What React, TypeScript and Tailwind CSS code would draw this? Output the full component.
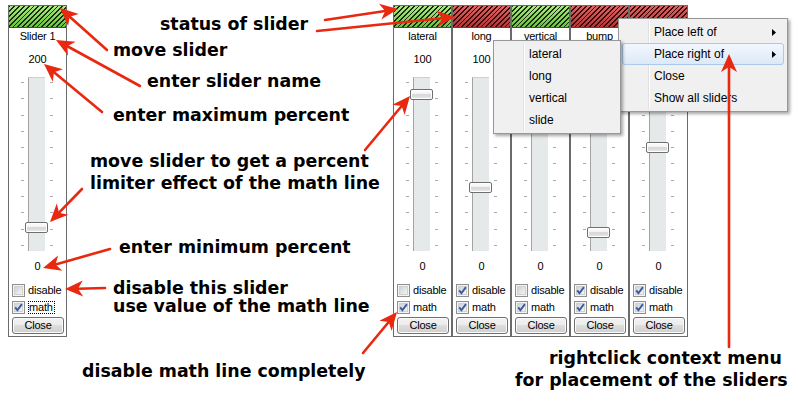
import React from 'react';

type Slider = {
  name: string;
  max: string;
  ok: boolean;
  thumb: string;
  disable: boolean;
  math: boolean;
  focus?: boolean;
};

const GREEN =
  '[background-image:repeating-linear-gradient(135deg,#1c2a12_0px,#1c2a12_1.3px,transparent_1.3px,transparent_3.4px),linear-gradient(#abeb80,#67c23b)]';
const RED =
  '[background-image:repeating-linear-gradient(135deg,#3b0c0c_0px,#3b0c0c_1.3px,transparent_1.3px,transparent_3.4px),linear-gradient(#de6565,#b43434)]';

const first: Slider = {
  name: 'Slider 1',
  max: '200',
  ok: true,
  thumb: 'top-[144.5px]',
  disable: false,
  math: true,
  focus: true,
};

const group: Slider[] = [
  { name: 'lateral', max: '100', ok: true, thumb: 'top-[11.5px]', disable: false, math: true },
  { name: 'long', max: '100', ok: false, thumb: 'top-[104.5px]', disable: true, math: true },
  { name: 'vertical', max: '100', ok: true, thumb: 'top-[25px]', disable: false, math: true },
  { name: 'bump', max: '100', ok: false, thumb: 'top-[149.5px]', disable: true, math: true },
  { name: 'slide', max: '100', ok: false, thumb: 'top-[64.5px]', disable: true, math: true },
];

const notes = [
  { text: 'status of slider', pos: 'left-[160px] top-[16px]' },
  { text: 'move slider', pos: 'left-[113px] top-[42px]' },
  { text: 'enter slider name', pos: 'left-[147px] top-[73px]' },
  { text: 'enter maximum percent', pos: 'left-[113px] top-[107px]' },
  { text: 'move slider to get a percent', pos: 'left-[90px] top-[153px]' },
  { text: 'limiter effect of the math line', pos: 'left-[90px] top-[175px]' },
  { text: 'enter minimum percent', pos: 'left-[119px] top-[239px]' },
  { text: 'disable this slider', pos: 'left-[113px] top-[280px]' },
  { text: 'use value of the math line', pos: 'left-[113px] top-[298px]' },
  { text: 'disable math line completely', pos: 'left-[82px] top-[363px]' },
  { text: 'rightclick context menu', pos: 'left-[549px] top-[350px]' },
  { text: 'for placement of the sliders', pos: 'left-[515px] top-[372px]' },
];

// tail -> tip
const arrows = [
  [107, 50, 60, 8],
  [140, 86, 56, 40],
  [102, 112, 44, 64],
  [82, 189, 50, 222],
  [365, 150, 410, 96],
  [110, 249, 43, 268],
  [105, 288, 65, 289],
  [325, 20, 398, 9],
  [317, 31, 455, 17],
  [363, 353, 397, 312],
  [729, 347, 729, 54],
];

function Arrow({ a }: { a: number[] }) {
  const [x1, y1, x2, y2] = a;
  const len = Math.hypot(x2 - x1, y2 - y1);
  const ux = (x2 - x1) / len;
  const uy = (y2 - y1) / len;
  const nx = -uy;
  const ny = ux;
  const L = 18;
  const W = 8;
  const N = 5;
  const bx = x2 - ux * L;
  const by = y2 - uy * L;
  const mx = x2 - ux * (L - N);
  const my = y2 - uy * (L - N);
  const pts = [
    [x2, y2],
    [bx + nx * W, by + ny * W],
    [mx, my],
    [bx - nx * W, by - ny * W],
  ]
    .map((p) => p.join(','))
    .join(' ');
  return (
    <g>
      <line x1={x1} y1={y1} x2={mx} y2={my} stroke="#e92810" strokeWidth="2.6" strokeLinecap="round" />
      <polygon points={pts} fill="#e92810" />
    </g>
  );
}

function Check({ on }: { on: boolean }) {
  return (
    <svg width="13" height="13" viewBox="0 0 13 13" className="shrink-0">
      <defs>
        <linearGradient id="cbx" x1="0" y1="0" x2="1" y2="1">
          <stop offset="0" stopColor="#cbcfd4" />
          <stop offset="1" stopColor="#f7f7f7" />
        </linearGradient>
      </defs>
      <rect x="0.5" y="0.5" width="12" height="12" fill="#f4f4f4" stroke="#8e8f8f" />
      <rect x="2.5" y="2.5" width="8" height="8" fill="url(#cbx)" stroke="#d0d0d0" />
      {on && (
        <path d="M3.2 6.4 L5.4 9.2 L9.9 3.1" fill="none" stroke="#3a5a9f" strokeWidth="1.9" />
      )}
    </svg>
  );
}

function Ticks() {
  return (
    <div className="w-[3px] h-full py-[5px] flex flex-col justify-between">
      {Array.from({ length: 11 }).map((_, i) => (
        <div key={i} className="h-px bg-[#a9a9a9]" />
      ))}
    </div>
  );
}

function Panel({ s }: { s: Slider }) {
  return (
    <div className="w-[59px] h-[332px] shrink-0 border border-[#6b6b6b] bg-white flex flex-col [font-family:'Liberation_Sans',Arial,sans-serif] text-[11px] tracking-[-0.2px] text-black">
      <div className={`h-[22px] shrink-0 border-b border-[#4a4a4a] ${s.ok ? GREEN : RED}`} />
      <div className="h-[16px] leading-[16px] text-center">{s.name}</div>
      <div className="h-[30px] flex items-center justify-center">{s.max}</div>
      <div className="h-[3px]" />
      <div className="relative h-[174px] flex pl-[12px]">
        <Ticks />
        <div className="ml-[4px] w-[17px] h-full bg-[#e6e9e9] border-l border-l-[#a3a3a3] border-t border-t-[#cfcfcf]" />
        <div className="ml-[5px] h-full">
          <Ticks />
        </div>
        <div
          className={`absolute left-[16px] w-[23px] h-[11px] rounded-[2px] border border-[#6f6f6f] shadow-[inset_0_0_0_1px_#ffffff] [background-image:linear-gradient(#fdfdfd_0%,#f3f3f3_40%,#d9d9d9_50%,#dddddd_75%,#f0f0f0_100%)] ${s.thumb}`}
        />
      </div>
      <div className="h-[31px] flex items-center justify-center">0</div>
      <div className="h-[17px] flex items-center pl-[3px] gap-[3px]">
        <Check on={s.disable} />
        <span>disable</span>
      </div>
      <div className="h-[17px] flex items-center pl-[3px] gap-[3px]">
        <Check on={s.math} />
        <span className={s.focus ? 'border border-dotted border-black leading-[11px] pr-[1px]' : ''}>math</span>
      </div>
      <div className="mt-[1px] ml-[3px] w-[52px] h-[17px] rounded-[3px] border border-[#707070] shadow-[inset_0_0_0_1px_#fbfbfb] [background-image:linear-gradient(#f2f2f2_0%,#ebebeb_50%,#dddddd_50%,#cfcfcf_100%)] flex items-center justify-center">
        Close
      </div>
    </div>
  );
}

function MenuItem({ label, sub, hot }: { label: string; sub?: boolean; hot?: boolean }) {
  return (
    <div
      className={`h-[22px] flex items-center justify-between pl-[31px] pr-[7px] rounded-[3px] border ${
        hot
          ? 'border-[#a9c9ef] [background-image:linear-gradient(#f2f7fd,#dde9f8)]'
          : 'border-transparent'
      }`}
    >
      <span>{label}</span>
      {sub && (
        <svg width="4" height="7" viewBox="0 0 4 7">
          <polygon points="0,0 4,3.5 0,7" fill="#000" />
        </svg>
      )}
    </div>
  );
}

function Menu({ className, children }: { className: string; children: React.ReactNode }) {
  return (
    <div
      className={`absolute bg-[#f0f0f0] border border-[#979797] px-[3px] py-[2px] shadow-[2px_2px_3px_rgba(0,0,0,0.35)] [font-family:'Liberation_Sans',Arial,sans-serif] text-[12px] text-black ${className}`}
    >
      <div className="absolute left-[29px] top-[2px] bottom-[2px] w-[2px] [background-image:linear-gradient(to_right,#e0e0e0_50%,#ffffff_50%)]" />
      <div className="relative">{children}</div>
    </div>
  );
}

export default function App() {
  return (
    <div className="relative w-[798px] h-[402px] bg-white overflow-hidden flex items-start pt-[5px] pl-[8px]">
      <Panel s={first} />
      <div className="ml-[326px] flex">
        {group.map((s) => (
          <Panel key={s.name} s={s} />
        ))}
      </div>

      {/* context menus */}
      <Menu className="left-[618px] top-[18px] w-[170px] z-10">
        <MenuItem label="Place left of" sub />
        <MenuItem label="Place right of" sub hot />
        <MenuItem label="Close" />
        <MenuItem label="Show all sliders" />
      </Menu>
      <Menu className="left-[493px] top-[40px] w-[128px] z-20">
        <MenuItem label="lateral" />
        <MenuItem label="long" />
        <MenuItem label="vertical" />
        <MenuItem label="slide" />
      </Menu>

      {/* annotations */}
      {notes.map((n) => (
        <div
          key={n.text}
          className={`absolute z-30 whitespace-nowrap leading-none text-[17.4px] font-bold text-black [font-family:'DejaVu_Sans',sans-serif] ${n.pos}`}
        >
          {n.text}
        </div>
      ))}
      <svg className="absolute left-0 top-0 z-40 pointer-events-none" width="798" height="402" viewBox="0 0 798 402">
        {arrows.map((a, i) => (
          <Arrow key={i} a={a} />
        ))}
      </svg>
    </div>
  );
}
